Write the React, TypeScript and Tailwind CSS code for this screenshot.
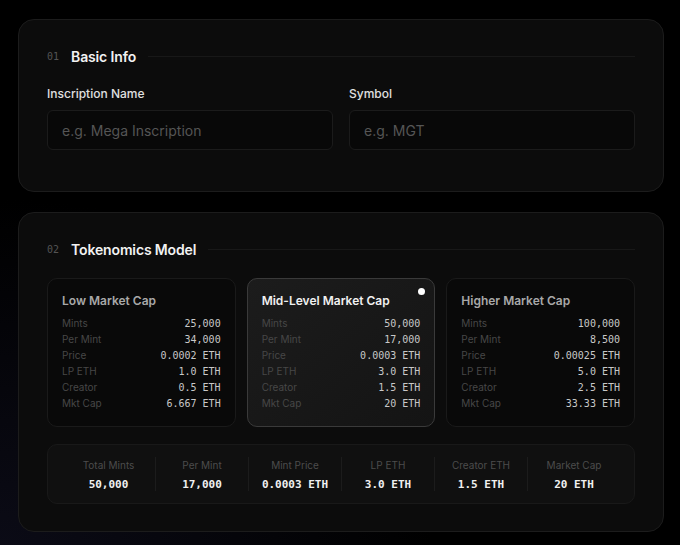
import React from "react";

type Tier = {
  name: string;
  rows: [string, string][];
  active?: boolean;
};

const tiers: Tier[] = [
  {
    name: "Low Market Cap",
    rows: [
      ["Mints", "25,000"],
      ["Per Mint", "34,000"],
      ["Price", "0.0002 ETH"],
      ["LP ETH", "1.0 ETH"],
      ["Creator", "0.5 ETH"],
      ["Mkt Cap", "6.667 ETH"],
    ],
  },
  {
    name: "Mid-Level Market Cap",
    active: true,
    rows: [
      ["Mints", "50,000"],
      ["Per Mint", "17,000"],
      ["Price", "0.0003 ETH"],
      ["LP ETH", "3.0 ETH"],
      ["Creator", "1.5 ETH"],
      ["Mkt Cap", "20 ETH"],
    ],
  },
  {
    name: "Higher Market Cap",
    rows: [
      ["Mints", "100,000"],
      ["Per Mint", "8,500"],
      ["Price", "0.00025 ETH"],
      ["LP ETH", "5.0 ETH"],
      ["Creator", "2.5 ETH"],
      ["Mkt Cap", "33.33 ETH"],
    ],
  },
];

const summary: [string, string][] = [
  ["Total Mints", "50,000"],
  ["Per Mint", "17,000"],
  ["Mint Price", "0.0003 ETH"],
  ["LP ETH", "3.0 ETH"],
  ["Creator ETH", "1.5 ETH"],
  ["Market Cap", "20 ETH"],
];

const sans = "font-['Inter','Noto_Sans',sans-serif]";
const mono = "font-['DejaVu_Sans_Mono','Liberation_Mono',monospace]";

function SectionHeader({ num, title }: { num: string; title: string }) {
  return (
    <div className="flex h-5 items-center gap-3">
      <span className={`${mono} text-[10px] text-[#545454]`}>{num}</span>
      <h2 className="text-[14px] font-semibold tracking-[-0.01em] text-[#f2f2f2]">{title}</h2>
      <div className="h-px flex-1 bg-[#181818]" />
    </div>
  );
}

function Field({ label, placeholder }: { label: string; placeholder: string }) {
  return (
    <div className="flex flex-col gap-2">
      <label className="text-[12px] leading-4 font-medium text-[#e0e0e0]">{label}</label>
      <input
        placeholder={placeholder}
        className="h-10 w-full rounded-md border border-[#1b1b1b] bg-[#080808] px-[14px] text-[14px] text-white outline-none placeholder:text-[#555555]"
      />
    </div>
  );
}

function TierCard({ tier }: { tier: Tier }) {
  return (
    <div
      className={`relative h-[149px] rounded-[10px] border px-[14px] pt-[14px] ${
        tier.active
          ? "border-[#3a3a3a] bg-gradient-to-br from-[#1c1c1c] to-[#141414]"
          : "border-[#1a1a1a] bg-[#090909]"
      }`}
    >
      {tier.active && (
        <span className="absolute right-[9px] top-[9px] h-[7px] w-[7px] rounded-full bg-white" />
      )}
      <h3
        className={`text-[12px] leading-4 font-semibold ${
          tier.active ? "text-[#f0f0f0]" : "text-[#a8a8a8]"
        }`}
      >
        {tier.name}
      </h3>
      <div className="mt-[6px] flex flex-col">
        {tier.rows.map(([k, v]) => (
          <div key={k} className="flex h-4 items-center justify-between">
            <span className="text-[10px] text-[#474747]">{k}</span>
            <span className={`${mono} text-[10px] text-[#c8c8c8]`}>{v}</span>
          </div>
        ))}
      </div>
    </div>
  );
}

export default function App() {
  return (
    <div
      className={`${sans} min-h-[545px] w-full bg-[radial-gradient(ellipse_at_0%_100%,#0b0b16_0%,#000000_45%)] pl-[18px] pr-[16px] pt-[19px] pb-4`}
    >
      <div className="flex flex-col gap-5">
        {/* basic info */}
        <section className="rounded-[16px] border border-[#1c1c1c] bg-[#0c0c0c] px-7 pt-[26px] pb-[41px]">
          <SectionHeader num="01" title="Basic Info" />
          <div className="mt-5 grid grid-cols-2 gap-4">
            <Field label="Inscription Name" placeholder="e.g. Mega Inscription" />
            <Field label="Symbol" placeholder="e.g. MGT" />
          </div>
        </section>

        {/* tokenomics */}
        <section className="rounded-[16px] border border-[#1c1c1c] bg-[#0c0c0c] px-7 pt-[26px] pb-[27px]">
          <SectionHeader num="02" title="Tokenomics Model" />
          <div className="mt-[19px] grid grid-cols-3 gap-[11px]">
            {tiers.map((t) => (
              <TierCard key={t.name} tier={t} />
            ))}
          </div>
          <div className="mt-[17px] grid h-[60px] grid-cols-6 items-center rounded-[10px] border border-[#191919] bg-[#101010] px-[14px]">
            {summary.map(([k, v], i) => (
              <div
                key={k}
                className={`flex h-[34px] flex-col items-center justify-center gap-[6px] pt-[3px] ${
                  i > 0 ? "border-l border-[#1c1c1c]" : ""
                }`}
              >
                <span className="text-[10px] leading-3 text-[#4c4c4c]">{k}</span>
                <span className={`${mono} text-[11px] leading-4 font-bold text-[#f0f0f0]`}>{v}</span>
              </div>
            ))}
          </div>
        </section>
      </div>
    </div>
  );
}
